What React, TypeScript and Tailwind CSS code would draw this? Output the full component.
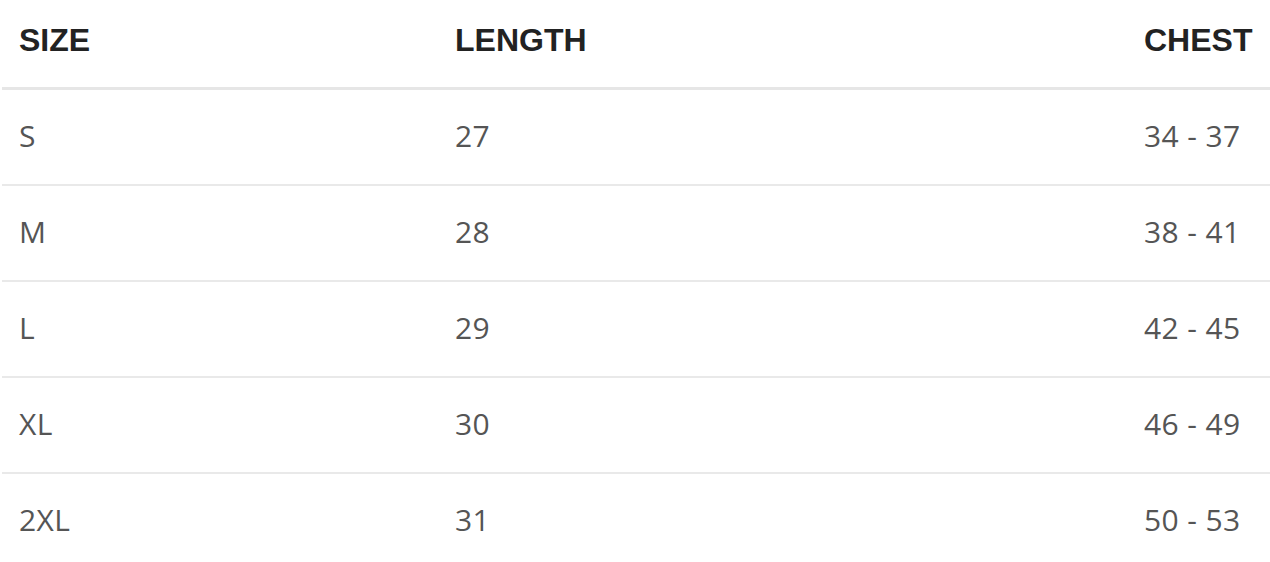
export default function App() {
  const rows = [
    ["S", "27", "34 - 37"],
    ["M", "28", "38 - 41"],
    ["L", "29", "42 - 45"],
    ["XL", "30", "46 - 49"],
    ["2XL", "31", "50 - 53"],
  ];
  return (
    <div className="w-[1270px] h-[562px] overflow-hidden bg-white pl-[2px]">
      <div className="grid grid-cols-[436px_1fr_143px] h-[90px] pb-[7px] items-center border-b-[3px] border-[#e6e6e6] font-['Liberation_Sans',Arial,sans-serif] font-bold text-[32px] text-[#222]">
        <div className="pl-[17px]">SIZE</div>
        <div className="pl-[17px]">LENGTH</div>
        <div className="pl-[17px]">CHEST</div>
      </div>
      {rows.map((r) => (
        <div
          key={r[0]}
          className="grid grid-cols-[436px_1fr_143px] h-[96px] pb-[4px] items-center border-b-2 border-[#e9e9e9] font-['Open_Sans',sans-serif] text-[30px] tracking-[0.4px] text-[#555]"
        >
          <div className="pl-[17px]">{r[0]}</div>
          <div className="pl-[17px]">{r[1]}</div>
          <div className="pl-[17px]">{r[2]}</div>
        </div>
      ))}
    </div>
  );
}
